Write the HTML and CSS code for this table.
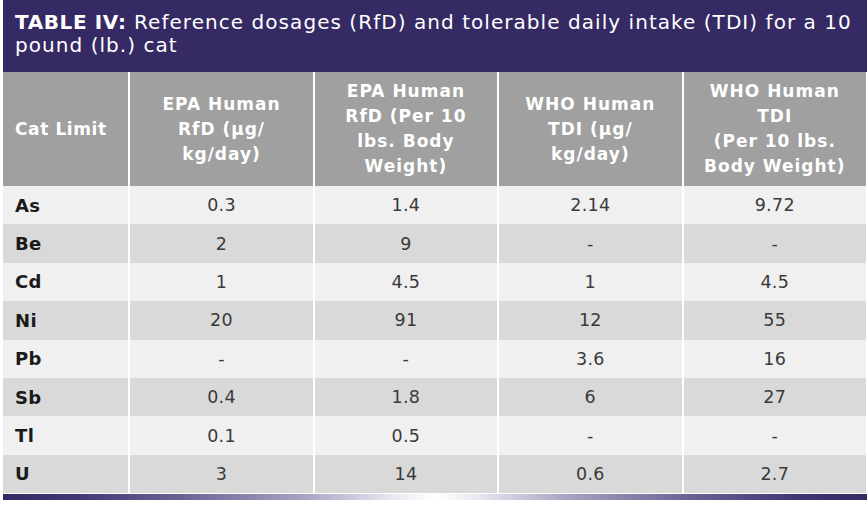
FILE: index.html
```html
<!DOCTYPE html>
<html lang="en">
<head>
<meta charset="utf-8">
<title>Table IV</title>
<link rel="stylesheet" href="styles.css">
</head>
<body>
<div class="figure">
  <div class="caption"><span class="label">TABLE IV:</span> Reference dosages (RfD) and tolerable daily intake (TDI) for a 10 pound (lb.) cat</div>
  <table class="data">
    <thead>
      <tr>
        <th class="first">Cat Limit</th>
        <th>EPA Human<br>RfD (μg/<br>kg/day)</th>
        <th>EPA Human<br>RfD (Per 10<br>lbs. Body<br>Weight)</th>
        <th>WHO Human<br>TDI (μg/<br>kg/day)</th>
        <th>WHO Human<br>TDI<br>(Per 10 lbs.<br>Body Weight)</th>
      </tr>
    </thead>
    <tbody>
      <tr><td class="el">As</td><td>0.3</td><td>1.4</td><td>2.14</td><td>9.72</td></tr>
      <tr><td class="el">Be</td><td>2</td><td>9</td><td>-</td><td>-</td></tr>
      <tr><td class="el">Cd</td><td>1</td><td>4.5</td><td>1</td><td>4.5</td></tr>
      <tr><td class="el">Ni</td><td>20</td><td>91</td><td>12</td><td>55</td></tr>
      <tr><td class="el">Pb</td><td>-</td><td>-</td><td>3.6</td><td>16</td></tr>
      <tr><td class="el">Sb</td><td>0.4</td><td>1.8</td><td>6</td><td>27</td></tr>
      <tr><td class="el">Tl</td><td>0.1</td><td>0.5</td><td>-</td><td>-</td></tr>
      <tr><td class="el">U</td><td>3</td><td>14</td><td>0.6</td><td>2.7</td></tr>
    </tbody>
  </table>
  <div class="rule"></div>
</div>
</body>
</html>
```

FILE: styles.css
```css
html, body {
  margin: 0;
  padding: 0;
  background: #ffffff;
}

body {
  font-family: "DejaVu Sans", "Liberation Sans", sans-serif;
}

.figure {
  width: 867px;
  margin-left: 1px;
}

.caption {
  margin: 0 1px 0 2px;
  height: 72px;
  box-sizing: border-box;
  padding: 11px 4px 0 12px;
  background: #352a63;
  color: #ffffff;
  font-size: 20px;
  line-height: 23px;
  letter-spacing: 1.05px;
}

.caption .label {
  font-weight: bold;
  letter-spacing: 0.6px;
}

.data {
  border-collapse: separate;
  border-spacing: 2px 0;
  table-layout: fixed;
  width: 867px;
}

.data th {
  height: 114px;
  padding: 0;
  background: #a0a0a0;
  color: #ffffff;
  font-weight: bold;
  font-size: 17px;
  line-height: 25px;
  letter-spacing: 1px;
  text-align: center;
  vertical-align: middle;
  width: 182px;
}

.data th.first {
  width: 125px;
  text-align: left;
  padding-left: 12px;
  letter-spacing: 0.6px;
  box-sizing: border-box;
}

.data td {
  height: 38.4px;
  padding: 0;
  text-align: center;
  vertical-align: middle;
  color: #3a3a3a;
  font-size: 17.5px;
  font-weight: normal;
  letter-spacing: 0.3px;
}

.data tbody tr:nth-child(odd) td {
  background: #f0f0f0;
}

.data tbody tr:nth-child(even) td {
  background: #d9d9d9;
}

.data td.el {
  text-align: left;
  padding-left: 12px;
  font-weight: bold;
  font-size: 18px;
  letter-spacing: 0.4px;
  color: #1a1a1a;
}

.rule {
  margin: 1px 1px 0 2px;
  height: 6px;
  background: linear-gradient(to right, #352a63 0%, #433573 8%, #6b5e93 20%, #a79dc0 34%, #e9e6f0 45%, #ffffff 50%, #e9e6f0 55%, #a79dc0 66%, #6b5e93 80%, #433573 92%, #352a63 100%);
  box-shadow: 0 1px 1px #e6e6e6;
}
```
